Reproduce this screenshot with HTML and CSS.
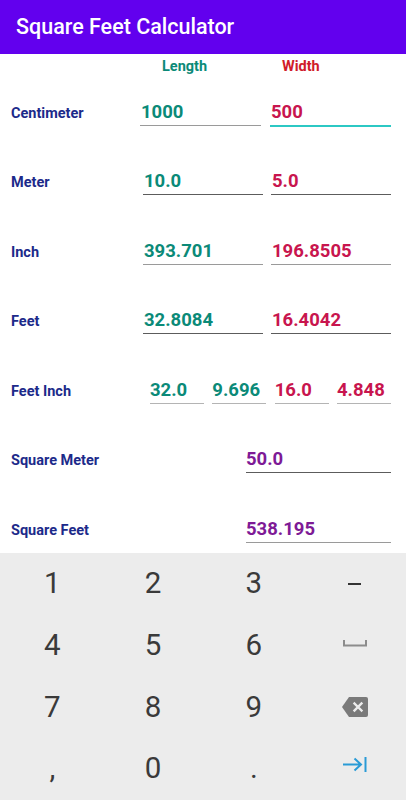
FILE: index.html
```html
<!DOCTYPE html>
<html>
<head>
<meta charset="utf-8">
<link rel="stylesheet" href="styles.css">
</head>
<body>
<div class="app">
  <header class="appbar">Square Feet Calculator</header>
  <main class="content">
    <div class="colhead">
      <span class="h-length">Length</span>
      <span class="h-width">Width</span>
    </div>
    <div class="row">
      <span class="label">Centimeter</span>
      <div class="fields f-cm">
        <div class="field len">1000</div>
        <div class="field wid focused">500</div>
      </div>
    </div>
    <div class="row">
      <span class="label">Meter</span>
      <div class="fields f-std">
        <div class="field len dark">10.0</div>
        <div class="field wid dark">5.0</div>
      </div>
    </div>
    <div class="row">
      <span class="label">Inch</span>
      <div class="fields f-std">
        <div class="field len">393.701</div>
        <div class="field wid">196.8505</div>
      </div>
    </div>
    <div class="row">
      <span class="label">Feet</span>
      <div class="fields f-std">
        <div class="field len dark">32.8084</div>
        <div class="field wid dark">16.4042</div>
      </div>
    </div>
    <div class="row">
      <span class="label">Feet Inch</span>
      <div class="fields f-fi">
        <div class="field len light">32.0</div>
        <div class="field len light">9.696</div>
        <div class="field wid light">16.0</div>
        <div class="field wid light">4.848</div>
      </div>
    </div>
    <div class="row">
      <span class="label">Square Meter</span>
      <div class="fields f-sq">
        <div class="field area dark">50.0</div>
      </div>
    </div>
    <div class="row">
      <span class="label">Square Feet</span>
      <div class="fields f-sq">
        <div class="field area">538.195</div>
      </div>
    </div>
  </main>
  <section class="keyboard">
    <div class="key">1</div>
    <div class="key">2</div>
    <div class="key">3</div>
    <div class="key"><span class="minus"></span></div>
    <div class="key">4</div>
    <div class="key">5</div>
    <div class="key">6</div>
    <div class="key"><svg class="space" width="24" height="7" viewBox="0 0 24 7"><path d="M1 0 V5.5 H23 V0" fill="none" stroke="#8c8c8c" stroke-width="2"/></svg></div>
    <div class="key">7</div>
    <div class="key">8</div>
    <div class="key">9</div>
    <div class="key"><svg class="bksp" width="26" height="20" viewBox="0 0 26 20"><path d="M7 0 H24 Q26 0 26 2 V18 Q26 20 24 20 H7 L0 10 Z" fill="#7a7a7a"/><path d="M12.5 6.5 L19.5 13.5 M19.5 6.5 L12.5 13.5" stroke="#ececec" stroke-width="2.4" stroke-linecap="square"/></svg></div>
    <div class="key">,</div>
    <div class="key">0</div>
    <div class="key">.</div>
    <div class="key"><svg class="tab" width="24" height="15" viewBox="0 0 24 15"><path d="M0 7.5 H18 M11.5 1.5 L18 7.5 L11.5 13.5" fill="none" stroke="#2a9bd6" stroke-width="2"/><path d="M22.5 0 V15" stroke="#2a9bd6" stroke-width="2"/></svg></div>
  </section>
</div>
</body>
</html>
```

FILE: styles.css
```css
* { box-sizing: border-box; }
html, body { margin: 0; padding: 0; }
body {
  font-family: Roboto, "Noto Sans", "Liberation Sans", sans-serif;
  background: #ffffff;
}
.app {
  width: 406px;
  height: 800px;
  display: flex;
  flex-direction: column;
  overflow: hidden;
}
.appbar {
  height: 54px;
  flex: 0 0 54px;
  background: #6200ee;
  color: #ffffff;
  font-size: 21.5px;
  font-weight: 500;
  display: flex;
  align-items: center;
  padding-left: 16px;
  padding-bottom: 1px;
}
.content {
  flex: 1 1 auto;
  overflow: hidden;
  display: flex;
  flex-direction: column;
}
.colhead {
  flex: 0 0 24.5px;
  display: flex;
  align-items: center;
  padding-left: 162px;
  font-size: 14.5px;
  font-weight: 700;
}
.h-length { color: #0b8a78; width: 120px; }
.h-width { color: #d01c2a; }
.row {
  flex: 0 0 69.5px;
  display: flex;
  align-items: center;
  justify-content: space-between;
  padding: 0 15px 0 11px;
}
.label {
  color: #1c2a8a;
  font-size: 14.5px;
  font-weight: 700;
}
.fields {
  display: flex;
  justify-content: space-between;
}
.f-cm { width: 251px; }
.f-std { width: 248px; }
.f-fi { width: 241px; }
.f-sq { width: 145px; }
.f-cm .field { width: 121px; }
.f-std .field { width: 120px; }
.f-fi .field { width: 54px; }
.f-sq .field { width: 145px; }
.field {
  font-size: 18.5px;
  font-weight: 700;
  line-height: 22px;
  height: 25px;
  padding-bottom: 2px;
  border-bottom: 1px solid #9a9a9a;
  white-space: nowrap;
}
.f-cm .field, .f-std .field { padding-left: 1px; }
.field.dark { border-bottom-color: #5c5c5c; }
.field.light { border-bottom-color: #b4b4b4; }
.field.focused {
  border-bottom: 2px solid #2cc8c4;
  height: 26px;
  margin-bottom: -1px;
}
.len { color: #0b8a78; }
.wid { color: #c8154e; }
.area { color: #7e1a96; }
.keyboard {
  flex: 0 0 247px;
  background: #ececec;
  display: grid;
  grid-template-columns: repeat(4, 1fr);
  grid-template-rows: repeat(4, 1fr);
  padding: 0 1px 0 2px;
}
.key {
  display: flex;
  align-items: center;
  justify-content: center;
  font-size: 29.5px;
  font-weight: 400;
  color: #3a3a3a;
  line-height: 1;
}
.minus {
  display: block;
  width: 13px;
  height: 2px;
  background: #333333;
}
.space { margin-top: -4px; }
.tab { margin-top: -10px; }
```
